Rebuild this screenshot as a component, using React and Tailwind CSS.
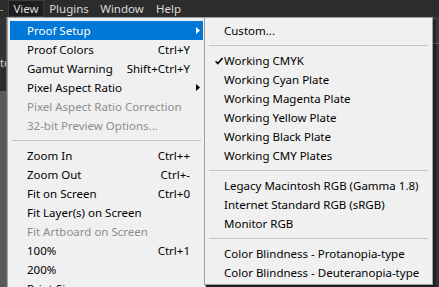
import React from 'react';

const font = { fontFamily: '"Noto Sans", "Open Sans", sans-serif' };

const viewItems = [
  { label: 'Proof Setup', sub: true, active: true },
  { label: 'Proof Colors', key: 'Ctrl+Y' },
  { label: 'Gamut Warning', key: 'Shift+Ctrl+Y' },
  { label: 'Pixel Aspect Ratio', sub: true },
  { label: 'Pixel Aspect Ratio Correction', disabled: true },
  { label: '32-bit Preview Options...', disabled: true },
  { sep: true },
  { label: 'Zoom In', key: 'Ctrl++' },
  { label: 'Zoom Out', key: 'Ctrl+-' },
  { label: 'Fit on Screen', key: 'Ctrl+0' },
  { label: 'Fit Layer(s) on Screen' },
  { label: 'Fit Artboard on Screen', disabled: true },
  { label: '100%', key: 'Ctrl+1' },
  { label: '200%' },
  { label: 'Print Size' },
];

const proofItems = [
  { label: 'Custom...' },
  { sep: true },
  { label: 'Working CMYK', checked: true },
  { label: 'Working Cyan Plate' },
  { label: 'Working Magenta Plate' },
  { label: 'Working Yellow Plate' },
  { label: 'Working Black Plate' },
  { label: 'Working CMY Plates' },
  { sep: true },
  { label: 'Legacy Macintosh RGB (Gamma 1.8)' },
  { label: 'Internet Standard RGB (sRGB)' },
  { label: 'Monitor RGB' },
  { sep: true },
  { label: 'Color Blindness - Protanopia-type' },
  { label: 'Color Blindness - Deuteranopia-type' },
];

function Arrow({ white }) {
  return (
    <svg width="4" height="7" viewBox="0 0 4 7" className="absolute right-[3px] top-[6px]">
      <path d="M0 0 L4 3.5 L0 7 Z" fill={white ? '#ffffff' : '#000000'} />
    </svg>
  );
}

function Check() {
  return (
    <svg width="8" height="8" viewBox="0 0 8 8" className="absolute left-[8px] top-[6px]">
      <path d="M0.5 4.2 L2.8 6.6 L7.5 1" fill="none" stroke="#000" strokeWidth="1.6" />
    </svg>
  );
}

function Separator() {
  return (
    <div className="py-[5px] px-[2px]">
      <div className="h-px bg-[#c5c5c5]" />
    </div>
  );
}

function ViewMenu() {
  return (
    <div className="absolute left-[7px] top-[17px] w-[199px] border border-[#a0a0a0] bg-[#f0f0f0] pt-[3px] px-[2px]">
      {viewItems.map((it, i) => {
        if (it.sep) return <Separator key={i} />;
        return (
          <div
            key={i}
            className={`relative flex h-[19px] items-center pl-[17px] pr-[13px] text-[11.5px] ${
              it.active ? 'bg-[#0078d7] text-white' : it.disabled ? 'text-[#8d8d8d]' : 'text-black'
            }`}
          >
            <span className="flex-1 whitespace-nowrap">{it.label}</span>
            {it.key && <span className="whitespace-nowrap">{it.key}</span>}
            {it.sub && <Arrow white={it.active} />}
          </div>
        );
      })}
    </div>
  );
}

function ProofMenu() {
  return (
    <div className="absolute left-[204px] top-[17px] w-[229px] border border-[#a0a0a0] bg-[#f0f0f0] pt-[3px] pb-[2px] px-[2px] shadow-[3px_3px_0_rgba(0,0,0,0.35)]">
      {proofItems.map((it, i) => {
        if (it.sep) return <Separator key={i} />;
        return (
          <div key={i} className="relative flex h-[19px] items-center pl-[17px] text-[11.5px] text-black whitespace-nowrap">
            {it.checked && <Check />}
            {it.label}
          </div>
        );
      })}
    </div>
  );
}

export default function App() {
  return (
    <div className="relative h-[287px] w-[439px] overflow-hidden bg-[#2f2f2f]" style={font}>
      <div className="flex h-[17px] items-center bg-[#2c2c2c] text-[11.5px] text-[#dadada]">
        <div className="w-[8px] text-[#bbb] text-[10px] leading-none">-</div>
        <div className="flex h-[17px] w-[36px] items-center justify-center border border-[#3c3c3c] bg-[#1e1e1e]">View</div>
        <div className="w-[50px] text-center">Plugins</div>
        <div className="w-[56px] text-center">Window</div>
        <div className="w-[37px] text-center">Help</div>
      </div>
      <div className="flex h-[270px]">
        <div className="flex w-[7px] flex-col border-r border-[#6a6a6a]">
          <div className="h-[40px] bg-[#333333]" />
          <div className="h-[12px] overflow-hidden bg-[#333333] text-[11px] leading-[12px] text-[#cfcfcf]">te</div>
          <div className="h-[22px] bg-[#2b2b2b]" />
          <div className="flex-1 bg-[#595959]" />
        </div>
        <div className="flex-1" />
        <div className="flex w-[6px] flex-col">
          <div className="h-[26px] bg-[#3a3a3a]" />
          <div className="h-px bg-[#6a6a6a]" />
          <div className="flex-1 bg-[#323232]" />
        </div>
      </div>
      <ViewMenu />
      <ProofMenu />
    </div>
  );
}
